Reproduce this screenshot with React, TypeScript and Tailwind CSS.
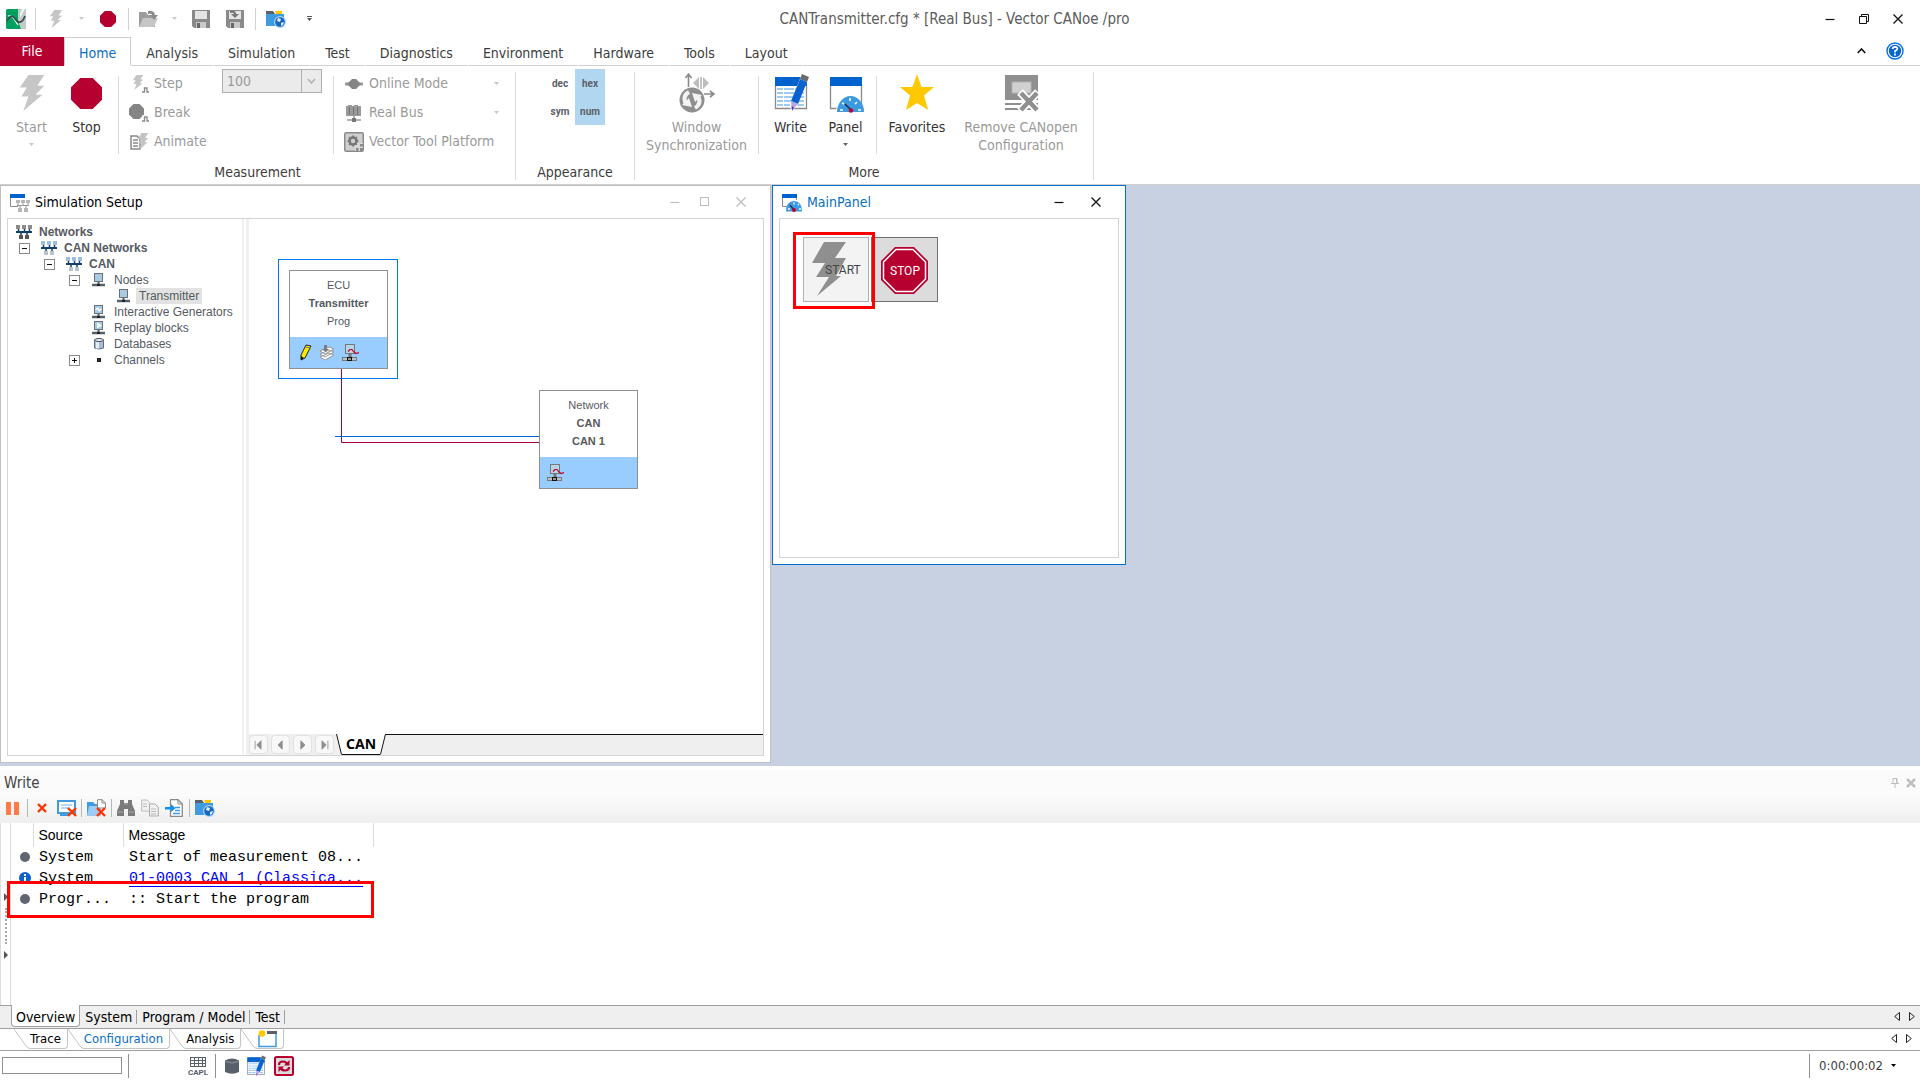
import { useState } from "react";
import type { ReactNode } from "react";
import clsx from "clsx";

const BOLT = "M6 0H15L11 6H15L10 11H14L3 20L6 12H2L5 7H1Z";
const OCTAGON = "M6 0H14L20 6V14L14 20H6L0 14V6Z";

function Bolt({ className }: { className: string }) {
  return (
    <svg viewBox="0 0 16 20" preserveAspectRatio="none" className={className}>
      <path d={BOLT} fill="currentColor" />
    </svg>
  );
}

function Octagon({ className }: { className: string }) {
  return (
    <svg viewBox="0 0 20 20" preserveAspectRatio="none" className={className}>
      <path d={OCTAGON} fill="currentColor" />
    </svg>
  );
}

function Caret({ className }: { className?: string }) {
  return (
    <svg viewBox="0 0 5 3" className={clsx("h-[3px] w-[5px] shrink-0", className)}>
      <path d="M0 0H5L2.5 3Z" fill="currentColor" />
    </svg>
  );
}

function LogoIcon() {
  return (
    <svg viewBox="0 0 20 20" className="size-5">
      <rect width="20" height="20" rx="1.5" fill="#00a15f" />
      <path d="M12 0H18.5Q20 0 20 1.500V18.500Q20 20 18.500 20H12Z" fill="#c2cbc8" />
      <path d="M16 0H19L14 9V5Z" fill="#eef2f0" />
      <path d="M12 20V12L15 20Z" fill="#00a15f" />
      <path d="M2 7Q6 6 8 10L12 16" stroke="#fff" strokeWidth="1.200" fill="none" />
      <path d="M1 12C5 4 8 8 10 11S16 15 19 7" stroke="#3d4a4c" strokeWidth="1.800" fill="none" />
    </svg>
  );
}

function OpenIcon() {
  return (
    <svg viewBox="0 0 20 18" className="h-[18px] w-5">
      <path d="M0 2H7L9 5H16V17H0Z" fill="#9c9c9c" />
      <path d="M4 8H19L15 17H0Z" fill="#c6c6c6" />
      <path d="M9 1Q15 0 16 5H19L15 10L11 5H13Q13 3 9 4Z" fill="#8b8b8b" />
    </svg>
  );
}

function SaveIcon({ arrow = false }: { arrow?: boolean }) {
  return (
    <svg viewBox="0 0 18 18" className="size-[18px]">
      <path d="M0 0H18V18H2L0 16Z" fill="#8a8a8a" />
      <path d="M3 1H15V9H3Z" fill="#e4e4e4" />
      <path d="M4 12H14V18H4Z" fill="#c9c9c9" />
      <path d="M5 13H8V18H5Z" fill="#666" />
      {arrow && <path d="M4 1Q10 0 10 4H13L9 8L5 4H8Q8 2 4 3Z" fill="#777" />}
    </svg>
  );
}

function FolderGlobeIcon() {
  return (
    <svg viewBox="0 0 20 18" className="h-[18px] w-5">
      <path d="M0 1H7L9 4H0Z" fill="#5a6069" />
      <path d="M9 1H16V4H10Z" fill="#ffc800" />
      <path d="M0 4H18V16H0Z" fill="#3f9ae0" />
      <circle cx="14" cy="12" r="6" fill="#a9d3f5" />
      <circle cx="14" cy="12" r="4.8" fill="#1767c0" />
      <path d="M12 8L15 9L14 12L11 11ZM15 13L18 12L17 15L15 16Z" fill="#e6f4ff" />
    </svg>
  );
}

function HelpIcon() {
  return (
    <svg viewBox="0 0 18 18" className="size-[18px]">
      <circle cx="9" cy="9" r="8" fill="#fff" stroke="#0a6fd6" strokeWidth="1.4" />
      <circle cx="9" cy="9" r="6.2" fill="#0a66cc" />
      <path d="M6.5 7Q7 4.7 9 4.8Q11.5 5 11.3 7Q11 8.3 9 9V10.5" fill="none" stroke="#fff" strokeWidth="1.7" />
      <rect x="8.1" y="11.5" width="1.8" height="2" fill="#fff" />
    </svg>
  );
}

function StepIcon() {
  return (
    <svg viewBox="0 0 20 20" className="size-5">
      <path transform="translate(3 1) scale(.75)" d={BOLT} fill="#c4c4c4" />
      <path d="M13 18H15.500V14H18V18H20" fill="none" stroke="#8a8a8a" strokeWidth="1.300" />
    </svg>
  );
}

function BreakIcon() {
  return (
    <svg viewBox="0 0 20 20" className="size-5">
      <path transform="translate(0 1) scale(.75)" d={OCTAGON} fill="#858585" />
      <path d="M12 18H15V14H18V18H20" fill="none" stroke="#fff" strokeWidth="3.500" />
      <path d="M13 18H15.500V14H18V18H20" fill="none" stroke="#8a8a8a" strokeWidth="1.300" />
    </svg>
  );
}

function AnimateIcon() {
  return (
    <svg viewBox="0 0 20 20" className="size-5">
      <path d="M2 4H8L11 7V17H2Z" fill="#fff" stroke="#8a8a8a" strokeWidth="1.5" />
      <path d="M4 8H9M4 11H9M4 14H9" stroke="#8a8a8a" strokeWidth="1.4" />
      <path transform="translate(8 1) scale(.75 .85)" d={BOLT} fill="#c4c4c4" />
    </svg>
  );
}

function OnlineIcon() {
  return (
    <svg viewBox="0 0 20 20" className="size-5">
      <path d="M1 10H19" stroke="#9a9a9a" strokeWidth="3" />
      <path d="M3 10L8 5H12L17 10L12 15H8Z" fill="#858585" />
    </svg>
  );
}

function RealBusIcon() {
  return (
    <svg viewBox="0 0 20 20" className="size-5">
      <path d="M2 3H4V2H8V3H10V2H14V3H17V13H2Z" fill="#9a9a9a" />
      <path d="M5.500 4V12M9.500 4V12M13.500 4V12" stroke="#747474" />
      <path d="M10 13V16M3 17H17" stroke="#9a9a9a" strokeWidth="1.600" />
      <rect x="8" y="15" width="4" height="4" fill="#777" />
    </svg>
  );
}

function PlatformIcon() {
  return (
    <svg viewBox="0 0 20 20" className="size-5">
      <rect x=".75" y=".75" width="18.500" height="18.500" rx="1.500" fill="#cfcfcf" stroke="#8a8a8a" strokeWidth="1.500" />
      <circle cx="9" cy="9" r="3.500" fill="none" stroke="#777" strokeWidth="2.600" />
      <path d="M9 3.500V5M9 13V14.500M3.500 9H5M13 9H14.500M5 5L6 6M12 12L13 13M13 5L12 6M5 13L6 12" stroke="#777" strokeWidth="1.600" />
      <path d="M11 13H13V11H19V19H11Z" fill="#d8d8d8" />
      <path d="M12 16H14.500V19H12ZM16 12H19V14.500H16ZM16 16H19V19H16Z" fill="#8a8a8a" />
    </svg>
  );
}

function WindowSyncIcon() {
  return (
    <svg viewBox="0 0 36 40" className="h-10 w-9">
      <path d="M9.500 14V2M6.500 5L9.500 1L12.500 5M25 21H34M31 18L35 21L31 24" fill="none" stroke="#8a8a8a" strokeWidth="1.600" />
      <path d="M20 4V16L14 10ZM24 4V16L30 10Z" fill="#bdbdbd" />
      <path d="M22 4V16" stroke="#8a8a8a" />
      <circle cx="13" cy="27" r="13" fill="#fff" />
      <circle cx="13" cy="27" r="12.500" fill="#8f8f8f" />
      <path d="M10 19Q3 23 7 31M16 35Q23 31 19 23" fill="none" stroke="#f4f4f4" strokeWidth="4" />
      <path d="M3 32L13 34L10 25ZM23 22L13 20L16 29Z" fill="#f4f4f4" />
    </svg>
  );
}

function WriteIcon({ className }: { className: string }) {
  return (
    <svg viewBox="0 0 36 40" className={className}>
      <path d="M2.500 12V35.500H33.500V12" fill="#fff" stroke="#8a8a8a" strokeWidth="1.300" />
      <rect x="2" y="4" width="32" height="9" fill="#0062cc" />
      <path d="M4 16H31M4 20H31M4 24H31M4 28H31M4 32H31" stroke="#9dcbf4" strokeWidth="2" />
      <path d="M10.500 14V34M21.500 14V34" stroke="#fff" />
      <path d="M28 3L35 6L24 33L18 38L17 31Z" fill="#fff" />
      <path d="M29 1L36 4L34 9L27 6Z" fill="#6b6b6b" />
      <path d="M27 6L34 9L25 31L18 28Z" fill="#0a62cf" />
      <path d="M18 28L25 31L19 37Z" fill="#b9a6d8" />
      <path d="M18.500 33L21 34.500L19 38Z" fill="#4a35b8" />
    </svg>
  );
}

function PanelIcon() {
  return (
    <svg viewBox="0 0 36 40" className="h-10 w-9">
      <path d="M2.500 12V35.500H33.500V12" fill="#fff" stroke="#8a8a8a" strokeWidth="1.300" />
      <rect x="2" y="4" width="32" height="9" fill="#0062cc" />
      <path d="M8 39A14 15 0 0 1 36 39Z" fill="#fff" />
      <path d="M9 39A13.500 16 0 0 1 36 39Z" fill="#3c9ae2" />
      <path d="M12 37H15M30 37H33M14 30L16 31M22 25V28M29 29L27 31" stroke="#fff" strokeWidth="1.500" />
      <path d="M17 31L23 37" stroke="#234" strokeWidth="1.600" />
      <circle cx="23" cy="37.500" r="2.200" fill="#c00030" />
    </svg>
  );
}

function PanelWindowIcon() {
  return (
    <svg viewBox="0 0 20 18" className="h-[18px] w-5">
      <path d="M.5 4V12.500H6" fill="none" stroke="#8a8a8a" />
      <path d="M14.500 4V6" stroke="#8a8a8a" />
      <rect width="15" height="4" fill="#0062cc" />
      <path d="M4 17.500Q4 7 12 7T20 17.500Z" fill="#3c9ae2" />
      <path d="M6 15H8M12 8.500V10.500M16 11L17 10M17 15H19" stroke="#fff" strokeWidth="1.300" />
      <path d="M8 11L12 16" stroke="#234" strokeWidth="1.300" />
      <circle cx="12" cy="16" r="2" fill="#c00030" />
    </svg>
  );
}

function StarIcon() {
  return (
    <svg viewBox="0 0 36 40" className="h-10 w-9">
      <path d="M18 1L22.500 14H35L25 22.500L29 37L18 30L7 37L11 22.500L1 14H13.500Z" fill="#ffc800" />
    </svg>
  );
}

function RemoveIcon() {
  return (
    <svg viewBox="0 0 36 40" className="h-10 w-9">
      <rect x="2" y="2" width="33" height="25" fill="#8f8f8f" />
      <rect x="9" y="9" width="19" height="11" fill="#d0d0d0" stroke="#b3b3b3" />
      <path d="M2 31H35M2 36H35" stroke="#8f8f8f" strokeWidth="2" />
      <path d="M17 19L35 38M35 19L17 38" stroke="#fff" strokeWidth="8" />
      <path d="M18 20L34 37M34 20L18 37" stroke="#8f8f8f" strokeWidth="4.500" />
    </svg>
  );
}

function SetupIcon() {
  return (
    <svg viewBox="0 0 20 18" className="h-[18px] w-5">
      <path d="M.5 4V12.500H8" fill="none" stroke="#8a8a8a" />
      <rect width="15" height="4" fill="#0062cc" />
      <path d="M6 6H10V9H6ZM11 6H15V9H11ZM16 6H20V9H16ZM8 14H12V18H8ZM14 14H18V18H14Z" fill="#b5b5b5" />
      <path d="M7 11.500H19M8 9V12M13 9V12M18 9V12M10 12V14M16 12V14" stroke="#999" />
    </svg>
  );
}

function NetworkIcon({ tone }: { tone: "dark" | "blue" }) {
  const box = tone === "dark" ? "#8c8c8c" : "#9dbfdc";
  return (
    <svg viewBox="0 0 16 14" className="h-3.5 w-4">
      <path d="M0 0H4V4H0ZM6 0H10V4H6ZM12 0H16V4H12Z" fill={box} />
      <path d="M3 10H7V14H3ZM9 10H13V14H9Z" fill={tone === "dark" ? "#555" : "#b7c2cc"} />
      <path d="M0 7H16" stroke="#123f6d" strokeWidth="2" />
      <path d="M2.500 4V6M8.500 4V6M13.500 4V6M5 8V10M11 8V10" stroke="#123f6d" strokeWidth="1.500" />
    </svg>
  );
}

function NodeIcon({ mark }: { mark?: string }) {
  return (
    <svg viewBox="0 0 14 14" className="mx-px size-3.5">
      <rect x="2.500" y=".5" width="8" height="8" fill="#a9cbe2" stroke="#66707a" />
      {mark && <path d={mark} fill="none" stroke="#fff" strokeWidth="1.500" />}
      <path d="M6.500 9V11" stroke="#555" strokeWidth="2" />
      <path d="M0 12H13" stroke="#55616c" strokeWidth="2.500" />
      <rect x="5" y="11" width="3" height="2" fill="#222" />
    </svg>
  );
}

function DatabaseIcon() {
  return (
    <svg viewBox="0 0 14 14" className="mx-px size-3.5">
      <path d="M2.500 3Q7 1 11.500 3V11Q7 13 2.500 11Z" fill="#a9bcd6" stroke="#5f6a86" />
      <path d="M4 4.500H7V11.500H4Z" fill="#e4edf6" />
      <ellipse cx="7" cy="3" rx="4.500" ry="1.500" fill="#eef4fa" stroke="#3d4558" />
    </svg>
  );
}

function ChannelIcon() {
  return (
    <svg viewBox="0 0 14 14" className="mx-px size-3.5">
      <rect x="5" y="5" width="4" height="4" fill="#222" />
    </svg>
  );
}

function PencilIcon() {
  return (
    <svg viewBox="0 0 12 17" className="h-[17px] w-3">
      <path d="M6 1L11 2L5 14L1 16L1 11Z" fill="#ffe800" stroke="#222" />
      <path d="M1 12L4 14L1 16Z" fill="#111" />
      <path d="M5 3L11 4" stroke="#777" />
    </svg>
  );
}

function StackIcon() {
  return (
    <svg viewBox="0 0 16 16" className="size-4">
      <path d="M1 12L10 8L15 10L6 15ZM1 9L10 5L15 7L6 12ZM1 6L10 2L15 4L6 9Z" fill="#fff" stroke="#9a9a9a" />
      <path d="M5 0H8V4H10L6.500 7L3 4H5Z" fill="#7d7d7d" />
    </svg>
  );
}

function MonitorIcon() {
  return (
    <svg viewBox="0 0 17 17" className="size-[17px]">
      <rect x="3.500" y=".5" width="9" height="9" fill="#b8d3e6" stroke="#777" />
      <path d="M8 10V13" stroke="#777" strokeWidth="3" />
      <rect x=".5" y="13.500" width="14" height="3" fill="#b9c4cc" stroke="#777" />
      <rect x="5.500" y="13.500" width="4" height="3" fill="#999" stroke="#111" />
      <path d="M6 7.500L8 5.500H10L12 8L14 9.500L17 8.500" fill="none" stroke="#c00020" strokeWidth="1.200" />
    </svg>
  );
}

function RedCross({ className }: { className: string }) {
  return (
    <svg viewBox="0 0 10 10" className={className}>
      <path d="M1 1L9 9M9 1L1 9" stroke="#ff3300" strokeWidth="2.400" />
    </svg>
  );
}

function ScreenClearIcon() {
  return (
    <svg viewBox="0 0 20 18" className="h-[18px] w-5">
      <rect x="1" y="2" width="17" height="12" fill="#fff" stroke="#3f9ae0" strokeWidth="2" />
      <path d="M4 6H15M4 9H13" stroke="#9dcbf4" strokeWidth="1.500" />
      <path d="M3 16H11" stroke="#3f9ae0" strokeWidth="2" />
      <path d="M11 9L19 17M19 9L11 17" stroke="#ff3300" strokeWidth="2.400" />
    </svg>
  );
}

function FolderClearIcon() {
  return (
    <svg viewBox="0 0 20 18" className="h-[18px] w-5">
      <path d="M0 3H6L8 5H10V17H0Z" fill="#3f9ae0" />
      <path d="M2 7H14V17H0Z" fill="#9dcbf4" />
      <path d="M10.500 .7H15L18.500 4V9H10.500Z" fill="#fff" stroke="#8a8a8a" />
      <path d="M15 .7V4H18.500" fill="none" stroke="#8a8a8a" />
      <path d="M10 9L18 17M18 9L10 17" stroke="#ff3300" strokeWidth="2.400" />
    </svg>
  );
}

function BinocularsIcon() {
  return (
    <svg viewBox="0 0 18 18" className="size-[18px]">
      <path d="M3 1H7V4H11V1H15V5L18 12V17H11V10H7V17H0V12L3 5Z" fill="#7b7b7b" />
      <path d="M7 5H11M1 13H6M12 13H17" stroke="#aaa" />
    </svg>
  );
}

function CopyIcon() {
  return (
    <svg viewBox="0 0 18 18" className="size-[18px]">
      <path d="M.7 1H6L9 4V12H.7Z" fill="#f1f1f1" stroke="#bdbdbd" />
      <path d="M8.500 5H14L17.300 8V17H8.500Z" fill="#f1f1f1" stroke="#ababab" />
      <path d="M2 5H6M2 7.500H6M10 10H15M10 12.500H15M10 15H15" stroke="#bbb" />
    </svg>
  );
}

function ExportIcon() {
  return (
    <svg viewBox="0 0 18 18" className="size-[18px]">
      <path d="M5.500 .7H13L17.300 5V17.300H5.500Z" fill="#fff" stroke="#8a8a8a" strokeWidth="1.300" />
      <path d="M13 .7V5H17" fill="none" stroke="#8a8a8a" />
      <path d="M10 8.500H15M10 11.500H15M8 14.500H15" stroke="#3f9ae0" strokeWidth="1.300" />
      <path d="M0 8H6V5L10.500 9.300L6 13V10.500H0Z" fill="#1190f0" />
    </svg>
  );
}

function CaplIcon() {
  return (
    <svg viewBox="0 0 20 20" className="size-5">
      <path d="M2 1.500H18M2 4.500H18M2 7.500H18M2 10.500H18M2.500 1V11M6.500 1V11M10.500 1V11M14.500 1V11M17.500 1V11" stroke="#5a6069" />
      <text x="0" y="19" className="font-['Roboto'] text-[8px] font-bold" fill="#5a6069">
        CAPL
      </text>
    </svg>
  );
}

function StatusDbIcon() {
  return (
    <svg viewBox="0 0 14 16" className="h-4 w-3.5">
      <path d="M0 2.500Q7 -1.500 14 2.500V14Q7 17.500 0 14Z" fill="#5a6069" />
      <path d="M.5 3.500Q7 6.500 13.500 3.500" fill="none" stroke="#8d939c" />
    </svg>
  );
}

function RefreshIcon() {
  return (
    <svg viewBox="0 0 20 20" className="size-5">
      <rect x="1" y="1" width="18" height="18" rx="1.500" fill="#dcdcdc" stroke="#b6002f" strokeWidth="2" />
      <path d="M5 9Q5 5.500 9 5.500Q12 5.500 13 8M15 11Q15 14.500 11 14.500Q8 14.500 7 12" fill="none" stroke="#b6002f" strokeWidth="2.200" />
      <path d="M15.500 4V9.500H10ZM4.500 16V10.500H10Z" fill="#b6002f" />
    </svg>
  );
}

function NewPageIcon() {
  return (
    <svg viewBox="0 0 20 18" className="h-[18px] w-5">
      <path d="M2 5V16.500H19V4" fill="#fff" stroke="#3f9ae0" strokeWidth="1.500" />
      <rect x="10" y="1" width="10" height="3" fill="#5a6069" />
      <circle cx="5" cy="3.500" r="3.300" fill="#ffc800" />
    </svg>
  );
}

const dark = "#111";
const pale = "#bdbdbd";

function MinimizeGlyph({ color = dark }: { color?: string }) {
  return (
    <svg viewBox="0 0 10 10" className="size-2.5">
      <path d="M.5 5.500H9.500" stroke={color} strokeWidth="1.200" />
    </svg>
  );
}

function CloseGlyph({ color = dark }: { color?: string }) {
  return (
    <svg viewBox="0 0 10 10" className="size-2.5">
      <path d="M.5 .5L9.500 9.500M9.500 .5L.5 9.500" stroke={color} strokeWidth="1.300" />
    </svg>
  );
}

function ScrollArrows({ className }: { className: string }) {
  return (
    <div className={clsx("ml-auto flex items-center gap-[9px] pb-0.5", className)}>
      <button aria-label="Scroll left">
        <svg viewBox="0 0 6 9" className="h-[9px] w-1.5">
          <path d="M5.500 .5V8.500L.7 4.500Z" fill="none" stroke="#222" />
        </svg>
      </button>
      <button aria-label="Scroll right">
        <svg viewBox="0 0 6 9" className="h-[9px] w-1.5">
          <path d="M.5 .5V8.500L5.300 4.500Z" fill="none" stroke="#222" />
        </svg>
      </button>
    </div>
  );
}

function QuickAccess() {
  return (
    <div className="flex items-center">
      <LogoIcon />
      <span className="ml-[9px] h-[22px] w-px bg-[#d0d0d0]" />
      <button aria-label="Start" disabled className="ml-[13px]">
        <Bolt className="h-[18px] w-3.5 text-[#c6c6c6]" />
      </button>
      <Caret className="ml-4 text-[#c6c6c6]" />
      <button aria-label="Stop" className="ml-4">
        <Octagon className="size-4 text-[#b6002f]" />
      </button>
      <span className="ml-3 h-[22px] w-px bg-[#d0d0d0]" />
      <button aria-label="Open" disabled className="ml-2.5">
        <OpenIcon />
      </button>
      <Caret className="ml-[13px] text-[#c6c6c6]" />
      <button aria-label="Save" className="ml-[15px]">
        <SaveIcon />
      </button>
      <button aria-label="Save as" className="ml-4">
        <SaveIcon arrow />
      </button>
      <span className="ml-[11px] h-[22px] w-px bg-[#d0d0d0]" />
      <button aria-label="Open folder" className="ml-2.5">
        <FolderGlobeIcon />
      </button>
      <button aria-label="Customize" className="ml-[21px]">
        <svg viewBox="0 0 5 5" className="size-[5px]">
          <path d="M0 0H5V1H0ZM0 2H5L2.500 5Z" fill="#555" />
        </svg>
      </button>
    </div>
  );
}

function TitleBar() {
  return (
    <header className="grid h-[37px] grid-cols-[1fr_auto_1fr] items-center pr-[17px] pl-1.5">
      <QuickAccess />
      <h1 className="pt-0.5 text-[15px] text-[#5c5c5c]">CANTransmitter.cfg * [Real Bus] - Vector CANoe /pro</h1>
      <div className="flex items-center justify-end gap-6">
        <button aria-label="Minimize">
          <MinimizeGlyph />
        </button>
        <button aria-label="Restore">
          <svg viewBox="0 0 10 10" className="size-2.5">
            <path d="M.5 2.500H7.500V9.500H.5ZM2.500 2.500V.5H9.500V7.500H7.500" fill="none" stroke="#111" />
          </svg>
        </button>
        <button aria-label="Close">
          <CloseGlyph />
        </button>
      </div>
    </header>
  );
}

const ribbonTabs = [
  "Home",
  "Analysis",
  "Simulation",
  "Test",
  "Diagnostics",
  "Environment",
  "Hardware",
  "Tools",
  "Layout",
];

function RibbonTabs() {
  const [active, setActive] = useState("Home");

  return (
    <nav className="flex h-[29px] items-stretch">
      <button className="w-16 bg-[#b6002f] text-white">File</button>
      {ribbonTabs.map((tab) => (
        <button
          key={tab}
          onClick={() => setActive(tab)}
          className={clsx(
            "border px-3.5 pt-1",
            active === tab
              ? "border-[#d0d0d0] border-b-transparent text-[#0a6fc8]"
              : "border-transparent border-b-[#d0d0d0] text-[#3c3c3c]",
          )}
        >
          {tab}
        </button>
      ))}
      <div className="flex flex-1 items-center justify-end gap-5 border-b border-[#d0d0d0] pr-4">
        <button aria-label="Collapse ribbon">
          <svg viewBox="0 0 9 6" className="h-1.5 w-[9px]">
            <path d="M.7 5L4.500 1L8.300 5" fill="none" stroke="#111" strokeWidth="1.600" />
          </svg>
        </button>
        <button aria-label="Help">
          <HelpIcon />
        </button>
      </div>
    </nav>
  );
}

function Group({ title, children }: { title?: string; children: ReactNode }) {
  return (
    <section className="flex flex-col border-r border-[#dcdcdc]">
      <div className="flex h-[92px] shrink-0 items-start">{children}</div>
      <h2 className="text-center leading-4 text-[#3c3c3c]">{title}</h2>
    </section>
  );
}

function Divider() {
  return <span className="mt-1 h-[78px] w-px shrink-0 bg-[#dcdcdc]" />;
}

type BigButtonProps = {
  icon: ReactNode;
  lines: string[];
  width: string;
  disabled?: boolean;
  menu?: boolean;
};

function BigButton({ icon, lines, width, disabled = false, menu = false }: BigButtonProps) {
  return (
    <button
      disabled={disabled}
      className={clsx("flex flex-col items-center", width, disabled ? "text-[#9a9a9a]" : "text-[#333]")}
    >
      <span className="flex h-[46px] items-center pb-1">{icon}</span>
      {lines.map((line) => (
        <span key={line} className="leading-[18px] whitespace-nowrap">
          {line}
        </span>
      ))}
      {menu && <Caret className={clsx("mt-[7px]", disabled ? "text-[#c6c6c6]" : "text-[#666]")} />}
    </button>
  );
}

function SmallButton({ icon, label, menu = false }: { icon: ReactNode; label: string; menu?: boolean }) {
  return (
    <button disabled className="flex h-[29px] items-center gap-[5px] text-[#9a9a9a]">
      {icon}
      <span className="whitespace-nowrap">{label}</span>
      {menu && <Caret className="mr-2 ml-auto text-[#c6c6c6]" />}
    </button>
  );
}

const formats = [
  { label: "dec", active: false },
  { label: "hex", active: true },
  { label: "sym", active: false },
  { label: "num", active: true },
];

function Ribbon() {
  return (
    <div className="flex h-[118px] pt-1.5 pb-1">
      <Group title="Measurement">
        <div className="flex pl-1">
          <BigButton
            icon={<Bolt className="h-9 w-7 text-[#c6c6c6]" />}
            lines={["Start"]}
            width="w-[55px]"
            disabled
            menu
          />
          <BigButton icon={<Octagon className="size-[31px] text-[#b6002f]" />} lines={["Stop"]} width="w-[55px]" />
        </div>
        <span className="w-1" />
        <Divider />
        <div className="-mt-[3px] flex w-[95px] flex-col pl-2.5">
          <SmallButton icon={<StepIcon />} label="Step" />
          <SmallButton icon={<BreakIcon />} label="Break" />
          <SmallButton icon={<AnimateIcon />} label="Animate" />
        </div>
        <div className="-mt-[3px] ml-2 flex h-6 w-[100px] border border-[#b0b0b0] bg-[#ebebeb] text-[#9a9a9a]">
          <select aria-label="Step size" disabled className="grow appearance-none px-1 opacity-100">
            <option>100</option>
          </select>
          <span className="flex w-5 items-center justify-center border-l border-[#b0b0b0]">
            <svg viewBox="0 0 9 6" className="h-1.5 w-[9px]">
              <path d="M1 1L4.500 5L8 1" fill="none" stroke="#b0b0b0" strokeWidth="1.500" />
            </svg>
          </span>
        </div>
        <span className="w-[11px]" />
        <Divider />
        <div className="-mt-[3px] flex w-[181px] flex-col pr-2 pl-2.5">
          <SmallButton icon={<OnlineIcon />} label="Online Mode" menu />
          <SmallButton icon={<RealBusIcon />} label="Real Bus" menu />
          <SmallButton icon={<PlatformIcon />} label="Vector Tool Platform" />
        </div>
      </Group>

      <Group title="Appearance">
        <div className="-mt-[3px] grid w-[118px] grid-cols-[30px_30px] pl-[29px]">
          {formats.map((f) => (
            <button
              key={f.label}
              className={clsx(
                "h-7 font-['Roboto'] text-[10px] font-bold text-[#5a6069]",
                f.active && "bg-[#b0d6f0]",
              )}
            >
              {f.label}
            </button>
          ))}
        </div>
      </Group>

      <Group title="More">
        <BigButton
          icon={<WindowSyncIcon />}
          lines={["Window", "Synchronization"]}
          width="w-[123px]"
          disabled
        />
        <Divider />
        <div className="flex pl-1">
          <BigButton icon={<WriteIcon className="h-10 w-9" />} lines={["Write"]} width="w-[55px]" />
          <BigButton icon={<PanelIcon />} lines={["Panel"]} width="w-[55px]" menu />
        </div>
        <span className="w-[3px]" />
        <Divider />
        <BigButton icon={<StarIcon />} lines={["Favorites"]} width="w-20" />
        <BigButton
          icon={<RemoveIcon />}
          lines={["Remove CANopen", "Configuration"]}
          width="w-[128px]"
          disabled
        />
        <span className="w-2" />
      </Group>
    </div>
  );
}

type TreeItem = {
  label: string;
  indent: string;
  icon: ReactNode;
  toggle?: "+" | "-";
  bold?: boolean;
  selected?: boolean;
};

const tree: TreeItem[] = [
  { label: "Networks", indent: "pl-2", icon: <NetworkIcon tone="dark" />, bold: true },
  { label: "CAN Networks", indent: "pl-[11px]", icon: <NetworkIcon tone="blue" />, toggle: "-", bold: true },
  { label: "CAN", indent: "pl-9", icon: <NetworkIcon tone="blue" />, toggle: "-", bold: true },
  { label: "Nodes", indent: "pl-[61px]", icon: <NodeIcon />, toggle: "-" },
  { label: "Transmitter", indent: "pl-[108px]", icon: <NodeIcon />, selected: true },
  { label: "Interactive Generators", indent: "pl-[83px]", icon: <NodeIcon mark="M4 5Q5.500 2 6.500 4.500T9 4" /> },
  { label: "Replay blocks", indent: "pl-[83px]", icon: <NodeIcon mark="M6 3L8.500 4.500L6 6Z" /> },
  { label: "Databases", indent: "pl-[83px]", icon: <DatabaseIcon /> },
  { label: "Channels", indent: "pl-[61px]", icon: <ChannelIcon />, toggle: "+" },
];

function NetworkTree() {
  return (
    <ul className="w-[236px] shrink-0 border-r-2 border-[#f0f0f0] pt-[5px] font-['Liberation_Sans'] text-[12px] leading-4 text-[#555a5f]">
      {tree.map((item) => (
        <li key={item.label} className={clsx("flex h-4 items-center", item.indent)}>
          {item.toggle && (
            <button
              aria-label={`Toggle ${item.label}`}
              className="mr-[11px] flex size-[11px] items-center justify-center border border-[#8a8a8a]"
            >
              <svg viewBox="0 0 5 5" className="size-[5px]">
                <path d={item.toggle === "+" ? "M0 2.500H5M2.500 0V5" : "M0 2.500H5"} stroke="#111" />
              </svg>
            </button>
          )}
          {item.icon}
          <span
            className={clsx(
              "ml-1 px-[3px]",
              item.bold && "font-bold",
              item.selected && "bg-[#e2e2e2]",
            )}
          >
            {item.label}
          </span>
        </li>
      ))}
    </ul>
  );
}

type BlockProps = { place: string; kind: string; name: string; detail: ReactNode; children: ReactNode };

function Block({ place, kind, name, detail, children }: BlockProps) {
  return (
    <div
      className={clsx(
        "absolute flex size-[99px] flex-col border border-[#8f8f8f] bg-white text-center font-['Liberation_Sans'] text-[11px] leading-[18px] text-[#555a5f]",
        place,
      )}
    >
      <div className="h-[66px] pt-[5px]">
        <p>{kind}</p>
        <p className="font-bold">{name}</p>
        {detail}
      </div>
      <div className="flex grow items-center bg-[#99ccff] pl-[7px]">{children}</div>
    </div>
  );
}

function SheetTabs() {
  return (
    <div className="flex h-[21px] shrink-0 bg-[#efefef]">
      <div className="flex items-center gap-[3px] pr-0.5">
        {["M6 1V11M13 1V11L8 6Z", "M12 1V11L7 6Z", "M8 1V11L13 6Z", "M7 1V11L12 6ZM14 1V11"].map((d) => (
          <button
            key={d}
            aria-label="Scroll sheets"
            className="flex h-[19px] w-[19px] items-center justify-center rounded-sm border border-[#e2e2e2] bg-[#f8f8f8]"
          >
            <svg viewBox="0 0 20 12" className="h-3 w-5">
              <path d={d} fill="#8f8f8f" stroke="#8f8f8f" />
            </svg>
          </button>
        ))}
      </div>
      <svg viewBox="0 0 6 21" className="h-[21px] w-1.5">
        <path d="M0 0L5.500 21H6V0Z" fill="#fff" />
        <path d="M.5 0L5.500 20.500" stroke="#111" />
      </svg>
      <button className="border-b border-[#111] bg-white px-1 font-['Noto_Sans'] text-[14px] leading-5 font-bold text-black">
        CAN
      </button>
      <svg viewBox="0 0 6 21" className="h-[21px] w-1.5">
        <path d="M0 0H6L1 21H0Z" fill="#fff" />
        <path d="M5.500 0L.5 20.500" stroke="#111" />
      </svg>
      <span className="grow border-t border-[#111]" />
    </div>
  );
}

function SimulationSetup() {
  return (
    <section className="flex h-[578px] w-[771px] shrink-0 flex-col border border-[#c0c0c4] bg-white px-1.5 pb-1.5">
      <div className="flex h-8 shrink-0 items-center pt-px pr-[18px] pl-[3px]">
        <SetupIcon />
        <h2 className="ml-[5px] text-black">Simulation Setup</h2>
        <div className="ml-auto flex gap-5 pb-0.5">
          <button aria-label="Minimize">
            <MinimizeGlyph color={pale} />
          </button>
          <button aria-label="Maximize">
            <svg viewBox="0 0 10 10" className="size-2.5">
              <rect x=".5" y=".5" width="8" height="8" fill="none" stroke={pale} />
            </svg>
          </button>
          <button aria-label="Close" className="ml-1.5">
            <CloseGlyph color={pale} />
          </button>
        </div>
      </div>
      <div className="flex min-h-0 grow border border-[#d4d4d4]">
        <NetworkTree />
        <div className="ml-0.5 flex min-w-0 grow flex-col border-l-[3px] border-[#f0f0f0]">
          <div className="relative grow">
            <div className="absolute top-10 left-[29px] size-[120px] border border-[#0078f0]" />
            <svg viewBox="0 0 512 512" className="absolute top-0 left-0 size-[512px]">
              <path d="M92.500 150V223.500H291" fill="none" stroke="#a8003c" />
              <path d="M86 217.500H291" stroke="#0066cc" />
            </svg>
            <Block place="top-[51px] left-10" kind="ECU" name="Transmitter" detail={<p>Prog</p>}>
              <div className="flex items-center gap-[7px] pl-[3px]">
                <PencilIcon />
                <StackIcon />
                <MonitorIcon />
              </div>
            </Block>
            <Block
              place="top-[171px] left-[290px]"
              kind="Network"
              name="CAN"
              detail={<p className="font-bold">CAN 1</p>}
            >
              <MonitorIcon />
            </Block>
          </div>
          <SheetTabs />
        </div>
      </div>
    </section>
  );
}

function MainPanel() {
  return (
    <section className="flex h-[380px] w-[354px] shrink-0 flex-col border border-[#0a6fc8] bg-white px-1.5 pb-1.5">
      <div className="flex h-8 shrink-0 items-center pt-px pr-[18px] pl-[3px]">
        <PanelWindowIcon />
        <h2 className="ml-[5px] text-[#0a6fc8]">MainPanel</h2>
        <div className="ml-auto flex gap-[27px] pb-0.5">
          <button aria-label="Minimize">
            <MinimizeGlyph />
          </button>
          <button aria-label="Close">
            <CloseGlyph />
          </button>
        </div>
      </div>
      <div className="relative flex grow items-start border border-[#d4d4d4] pt-[18px] pl-[23px]">
        <button aria-label="START" className="h-[65px] w-[66px] border border-[#adb2b5] bg-[#f3f3f3]">
          <svg viewBox="0 0 64 63" className="h-[63px] w-16">
            <path d="M20 4H42L31 20H42L32 38H37L13 58L25 39H12L21 25H8Z" fill="#8f8f8f" />
            <text x="21" y="36" className="font-['Roboto'] text-[12px]" fill="#444">
              START
            </text>
          </svg>
        </button>
        <button aria-label="STOP" className="ml-0.5 h-[65px] w-[67px] border border-[#707070] bg-[#dcdcdc]">
          <svg viewBox="0 0 65 63" className="h-[63px] w-[65px]">
            <path d="M23 9H42L56 23V42L42 56H23L9 42V23Z" fill="#b6002f" />
            <path d="M24 11.500H41L53.500 24V41L41 53.500H24L11.500 41V24Z" fill="none" stroke="#fff" strokeWidth="1.500" />
            <text x="18" y="37" className="font-['Roboto'] text-[12px]" fill="#fff">
              STOP
            </text>
          </svg>
        </button>
        <div className="pointer-events-none absolute top-[13px] left-[13px] h-[77px] w-[82px] border-[3px] border-[#ff0000]" />
      </div>
    </section>
  );
}

function BulletIcon() {
  return (
    <svg viewBox="0 0 12 12" className="size-3">
      <circle cx="6" cy="6" r="5" fill="#5f6670" />
    </svg>
  );
}

function InfoIcon() {
  return (
    <svg viewBox="0 0 12 12" className="size-3">
      <circle cx="6" cy="6" r="6" fill="#0a62cf" />
      <path d="M6 2V4M6 5V10" stroke="#fff" strokeWidth="2" />
    </svg>
  );
}

const messages = [
  { icon: <BulletIcon />, source: "System", text: "Start of measurement 08..." },
  { icon: <InfoIcon />, source: "System", text: "01-0003 CAN 1 (Classica...", link: true },
  { icon: <BulletIcon />, source: "Progr...", text: ":: Start the program" },
];

function WriteToolbar() {
  const rule = "h-[18px] w-px bg-[#b8b8b8]";

  return (
    <div className="flex h-7 shrink-0 items-center bg-linear-to-b from-[#fbfbfb] to-[#efefef] pb-0.5 pl-1.5">
      <button aria-label="Pause">
        <svg viewBox="0 0 13 13" className="size-[13px]">
          <path d="M0 0H5V13H0ZM8 0H13V13H8Z" fill="#ff7a45" />
        </svg>
      </button>
      <span className={clsx("ml-2", rule)} />
      <button aria-label="Clear" className="ml-[9px]">
        <RedCross className="size-2.5" />
      </button>
      <button aria-label="Clear window" className="ml-2.5">
        <ScreenClearIcon />
      </button>
      <span className={clsx("ml-1", rule)} />
      <button aria-label="Clear log" className="ml-[5px]">
        <FolderClearIcon />
      </button>
      <span className={clsx("ml-1", rule)} />
      <button aria-label="Find" className="ml-[5px]">
        <BinocularsIcon />
      </button>
      <button aria-label="Copy" className="ml-1.5">
        <CopyIcon />
      </button>
      <button aria-label="Export" className="ml-1.5">
        <ExportIcon />
      </button>
      <span className={clsx("ml-1.5", rule)} />
      <button aria-label="Open folder" className="ml-[5px]">
        <FolderGlobeIcon />
      </button>
    </div>
  );
}

const writeTabs = ["System", "Program / Model", "Test"];

function WriteWindow() {
  return (
    <section className="flex min-h-0 grow flex-col border-t-4 border-white bg-white">
      <div className="flex h-[25px] shrink-0 items-center bg-[#fbfbfb] pt-px pr-1 pl-1">
        <h2 className="text-[15px] text-[#444]">Write</h2>
        <div className="ml-auto flex items-center gap-[7px]">
          <button aria-label="Pin">
            <svg viewBox="0 0 8 10" className="h-2.5 w-2">
              <path d="M2 5.500V.5H6V5.500M0 5.500H8M4 6V10M5.500 1V5" fill="none" stroke="#bdbdbd" />
            </svg>
          </button>
          <button aria-label="Close">
            <svg viewBox="0 0 10 10" className="size-2.5">
              <path d="M1 1L9 9M9 1L1 9" stroke="#c0c0c0" strokeWidth="2.600" />
            </svg>
          </button>
        </div>
      </div>
      <WriteToolbar />
      <div className="relative flex min-h-0 grow">
        <div className="flex w-[11px] shrink-0 flex-col items-center border-r border-l border-[#dcdcdc] pt-[70px]">
          <svg viewBox="0 0 4 8" className="h-2 w-1">
            <path d="M0 0L4 4L0 8Z" fill="#555" />
          </svg>
          <span className="my-[7px] h-9 border-l-2 border-dotted border-[#aaa]" />
          <svg viewBox="0 0 4 8" className="h-2 w-1">
            <path d="M0 0L4 4L0 8Z" fill="#555" />
          </svg>
        </div>
        <table className="h-fit w-[362px] table-fixed border-collapse text-left text-black">
          <colgroup>
            <col className="w-[22px]" />
            <col className="w-[90px]" />
            <col className="w-[250px]" />
          </colgroup>
          <thead className="font-['Liberation_Sans'] text-[14px]">
            <tr className="h-6">
              <th aria-label="Type" className="border-r border-[#dcdcdc]" />
              <th className="border-r border-[#dcdcdc] pl-[5px] font-normal">Source</th>
              <th className="border-r border-[#dcdcdc] pl-[5px] font-normal">Message</th>
            </tr>
          </thead>
          <tbody className="font-['Liberation_Mono'] text-[15px] leading-[21px]">
            {messages.map((m) => (
              <tr key={m.text}>
                <td className="pb-0.5 pl-2">{m.icon}</td>
                <td className="pl-1.5">{m.source}</td>
                <td className="pl-1.5 whitespace-nowrap">
                  {m.link ? (
                    <a href="#message" className="text-[#0000ff] underline decoration-1 underline-offset-4">
                      {m.text}
                    </a>
                  ) : (
                    m.text
                  )}
                </td>
              </tr>
            ))}
          </tbody>
        </table>
        <div className="pointer-events-none absolute top-[58px] left-[7px] h-[37px] w-[367px] border-[3px] border-[#ff0000]" />
      </div>
      <div className="flex h-6 shrink-0 items-stretch border-y border-[#a0a0a0] bg-[#efefef] pl-[11px] text-black">
        <button className="-mt-px mb-px rounded-b-sm border border-t-0 border-[#a0a0a0] bg-white px-1 pt-0.5">
          Overview
        </button>
        {writeTabs.map((tab) => (
          <button key={tab} className="my-1 flex items-center border-r border-[#a0a0a0] pr-1 pl-[5px]">
            {tab}
          </button>
        ))}
        <ScrollArrows className="pr-[5px]" />
      </div>
    </section>
  );
}

function DesktopTab({ children, active = false }: { children: ReactNode; active?: boolean }) {
  return (
    <div className="flex">
      <svg viewBox="0 0 16 20" className="h-5 w-4">
        <path d="M0 0L12 17Q14 19.500 16 19.500" fill="none" stroke="#c4c4c4" />
      </svg>
      <button
        className={clsx(
          "flex h-5 items-center rounded-br border-r border-b border-[#c4c4c4] pr-1.5",
          active ? "text-[#0a6fc8]" : "text-black",
        )}
      >
        {children}
      </button>
    </div>
  );
}

function DesktopTabs() {
  return (
    <nav className="flex h-[22px] shrink-0 border-b border-[#a0a0a0] pl-3.5 text-[13px]">
      <DesktopTab>Trace</DesktopTab>
      <DesktopTab active>Configuration</DesktopTab>
      <DesktopTab>Analysis</DesktopTab>
      <DesktopTab>
        <NewPageIcon />
      </DesktopTab>
      <ScrollArrows className="pr-2" />
    </nav>
  );
}

function StatusBar() {
  return (
    <footer className="flex h-[29px] shrink-0 items-center pl-0.5">
      <input aria-label="Status" readOnly className="h-[17px] w-[120px] border border-[#8f8f8f] bg-white" />
      <span className="ml-1.5 h-6 w-px bg-[#8f8f8f]" />
      <span className="ml-[59px]">
        <CaplIcon />
      </span>
      <span className="ml-[7px] h-6 w-px bg-[#8f8f8f]" />
      <span className="ml-[9px]">
        <StatusDbIcon />
      </span>
      <span className="ml-[7px]">
        <WriteIcon className="h-[22px] w-5" />
      </span>
      <span className="ml-2">
        <RefreshIcon />
      </span>
      <div className="ml-auto flex h-6 items-center border-l border-[#8f8f8f] pr-6 pl-[9px] text-[13px] text-[#3c3c3c]">
        0:00:00:02
        <Caret className="ml-2 text-black" />
      </div>
    </footer>
  );
}

export default function App() {
  return (
    <div className="flex h-screen flex-col overflow-hidden bg-white font-['DejaVu_Sans_Condensed','Noto_Sans',sans-serif] text-[14px]">
      <TitleBar />
      <RibbonTabs />
      <Ribbon />
      <main className="flex h-[582px] shrink-0 items-start gap-px border-t border-[#d0d0d0] bg-[#c8d1e2]">
        <SimulationSetup />
        <MainPanel />
      </main>
      <WriteWindow />
      <DesktopTabs />
      <StatusBar />
    </div>
  );
}
